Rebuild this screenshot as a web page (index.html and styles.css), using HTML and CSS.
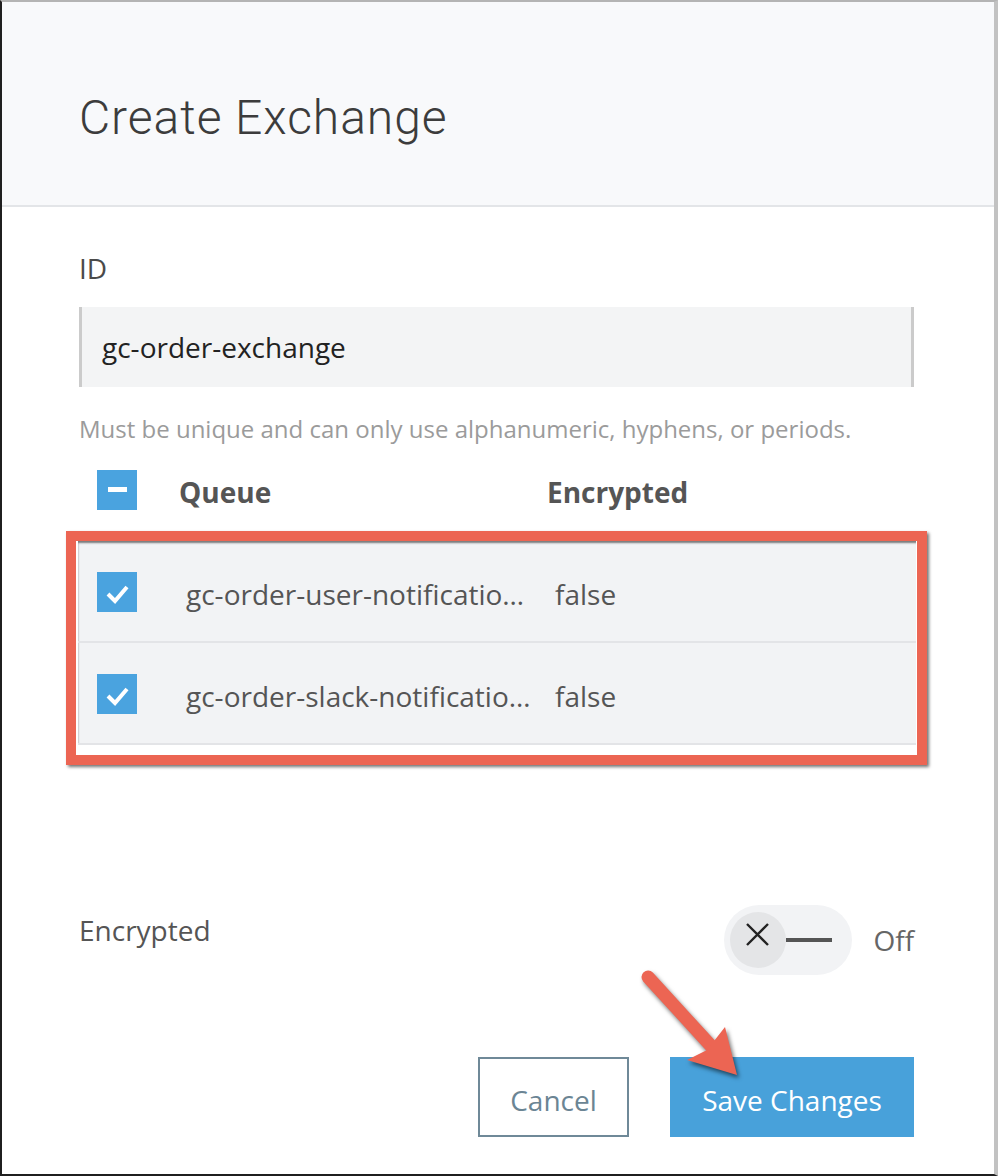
FILE: index.html
```html
<!DOCTYPE html>
<html lang="en">
<head>
<meta charset="utf-8">
<title>Create Exchange</title>
<link rel="stylesheet" href="styles.css">
</head>
<body>
<div class="frame">
  <header class="modal-header">
    <h1 class="title">Create Exchange</h1>
  </header>
  <main class="modal-body">
    <label class="field-label">ID</label>
    <div class="input">gc-order-exchange</div>
    <p class="helper">Must be unique and can only use alphanumeric, hyphens, or periods.</p>

    <div class="table-head">
      <span class="cb">
        <svg width="40" height="40" viewBox="0 0 40 40"><rect width="40" height="40" fill="#4aa3df"/><rect x="11" y="17" width="19" height="5" fill="#fff"/></svg>
      </span>
      <span class="col-queue th">Queue</span>
      <span class="th">Encrypted</span>
    </div>

    <div class="highlight">
      <div class="rows">
        <div class="row">
          <span class="cb">
            <svg width="40" height="40" viewBox="0 0 40 40"><rect width="40" height="40" fill="#4aa3df"/><polyline points="11,22 18,29 30,15" fill="none" stroke="#fff" stroke-width="4"/></svg>
          </span>
          <span class="col-queue td">gc-order-user-notificatio…</span>
          <span class="td">false</span>
        </div>
        <div class="row">
          <span class="cb">
            <svg width="40" height="40" viewBox="0 0 40 40"><rect width="40" height="40" fill="#4aa3df"/><polyline points="11,22 18,29 30,15" fill="none" stroke="#fff" stroke-width="4"/></svg>
          </span>
          <span class="col-queue td">gc-order-slack-notificatio…</span>
          <span class="td">false</span>
        </div>
      </div>
    </div>

    <div class="toggle-row">
      <span class="toggle-label">Encrypted</span>
      <div class="toggle-wrap">
        <div class="toggle">
          <span class="knob">
            <svg width="56" height="56" viewBox="0 0 56 56"><path d="M17 12 L38 33 M38 12 L17 33" stroke="#222" stroke-width="2.4" fill="none"/></svg>
          </span>
          <span class="track-line"></span>
        </div>
        <span class="toggle-state">Off</span>
      </div>
    </div>

    <div class="actions">
      <button class="btn btn-cancel">Cancel</button>
      <button class="btn btn-save">Save Changes</button>
    </div>
  </main>

  <svg class="arrow" width="998" height="1176" viewBox="0 0 998 1176">
    <g class="arrow-shape">
      <line x1="648" y1="977" x2="712" y2="1047" stroke="#ec6553" stroke-width="13" stroke-linecap="round"/>
      <polygon points="737,1075 687,1060 707,1050 725,1027" fill="#ec6553"/>
    </g>
  </svg>
</div>
</body>
</html>
```

FILE: styles.css
```css
html, body {
  margin: 0;
  padding: 0;
  background: #fff;
}

.frame {
  position: relative;
  width: 998px;
  height: 1176px;
  box-sizing: border-box;
  border-top: 2px solid #b4b4b4;
  border-left: 2px solid #1f1f1f;
  border-right: 4px solid #c2c2c2;
  border-bottom: 2px solid #1f1f1f;
  background: #fff;
  font-family: "Open Sans", "Liberation Sans", sans-serif;
  overflow: hidden;
}

.modal-header {
  height: 205px;
  box-sizing: border-box;
  background: #f8f9fb;
  border-bottom: 2px solid #e3e5e8;
  padding: 88px 0 0 77px;
}

.title {
  margin: 0;
  font-family: Roboto, "Liberation Sans", sans-serif;
  font-weight: 300;
  font-size: 48px;
  line-height: 56px;
  color: #3c3c3c;
  letter-spacing: 0.95px;
}

.modal-body {
  display: flex;
  flex-direction: column;
  padding: 0 80px 0 77px;
}

.field-label {
  display: block;
  margin-top: 42px;
  font-size: 28px;
  line-height: 38px;
  color: #4a4a4a;
}

.input {
  margin-top: 20px;
  height: 80px;
  box-sizing: border-box;
  background: #f3f4f5;
  border-left: 3px solid #cbcbcb;
  border-right: 3px solid #cbcbcb;
  padding-left: 20px;
  display: flex;
  align-items: center;
  font-size: 28px;
  color: #222;
}

.helper {
  margin: 26px 0 0;
  font-size: 24px;
  line-height: 32px;
  color: #9b9b9b;
}

.table-head {
  margin-top: 25px;
  height: 40px;
  display: flex;
  align-items: center;
  padding-left: 18px;
}

.cb {
  display: block;
  width: 40px;
  height: 40px;
  flex: none;
}

.cb svg {
  display: block;
}

.th {
  font-weight: 700;
  font-size: 28px;
  color: #555;
  position: relative;
  top: 2px;
}

.table-head .col-queue {
  margin-left: 42px;
  width: 368px;
}

.highlight {
  margin: 21px -13px 0 -13px;
  border: 10px solid #ec6553;
  padding: 0 1px 10px 2px;
  background: #fff;
  box-shadow: 2px 2px 3px rgba(0, 0, 0, 0.55);
}

.rows {
  background: #f2f3f5;
  box-shadow: inset 1px 3px 2px -1px rgba(0, 0, 0, 0.5);
}

.row {
  height: 100px;
  display: flex;
  align-items: center;
  padding-left: 19px;
  border-bottom: 2px solid #e3e4e7;
}

.row .cb {
  position: relative;
  top: 1px;
}

.td {
  font-size: 28px;
  color: #555;
  position: relative;
  top: 3px;
}

.row .col-queue {
  margin-left: 49px;
  width: 369px;
  white-space: nowrap;
}

.toggle-row {
  margin-top: 140px;
  display: flex;
  justify-content: space-between;
  align-items: flex-start;
}

.toggle-label {
  margin-top: 6px;
  font-size: 28px;
  line-height: 38px;
  color: #555;
}

.toggle-wrap {
  display: flex;
  align-items: center;
  gap: 21px;
}

.toggle {
  width: 128px;
  height: 70px;
  box-sizing: border-box;
  border-radius: 35px;
  background: #f2f3f5;
  padding: 7px 6px;
  display: flex;
  align-items: center;
}

.knob {
  display: block;
  width: 56px;
  height: 56px;
  border-radius: 50%;
  background: #e4e5e7;
  flex: none;
}

.knob svg {
  display: block;
}

.track-line {
  display: block;
  width: 46px;
  height: 4px;
  background: #555;
}

.toggle-state {
  font-size: 28px;
  color: #666;
  line-height: 38px;
}

.actions {
  margin-top: 82px;
  display: flex;
  justify-content: flex-end;
  gap: 41px;
}

.btn {
  height: 80px;
  box-sizing: border-box;
  font-family: "Open Sans", "Liberation Sans", sans-serif;
  font-size: 28px;
  border-radius: 0;
  padding: 5px 0 0;
  cursor: pointer;
}

.btn-cancel {
  width: 151px;
  background: #fff;
  border: 2px solid #6f8998;
  color: #6b8594;
}

.btn-save {
  width: 244px;
  background: #48a1da;
  border: none;
  color: #fff;
}

.arrow {
  position: absolute;
  left: -2px;
  top: -2px;
  pointer-events: none;
}

.arrow-shape {
  filter: drop-shadow(2px 3px 2px rgba(0, 0, 0, 0.55));
}
```
